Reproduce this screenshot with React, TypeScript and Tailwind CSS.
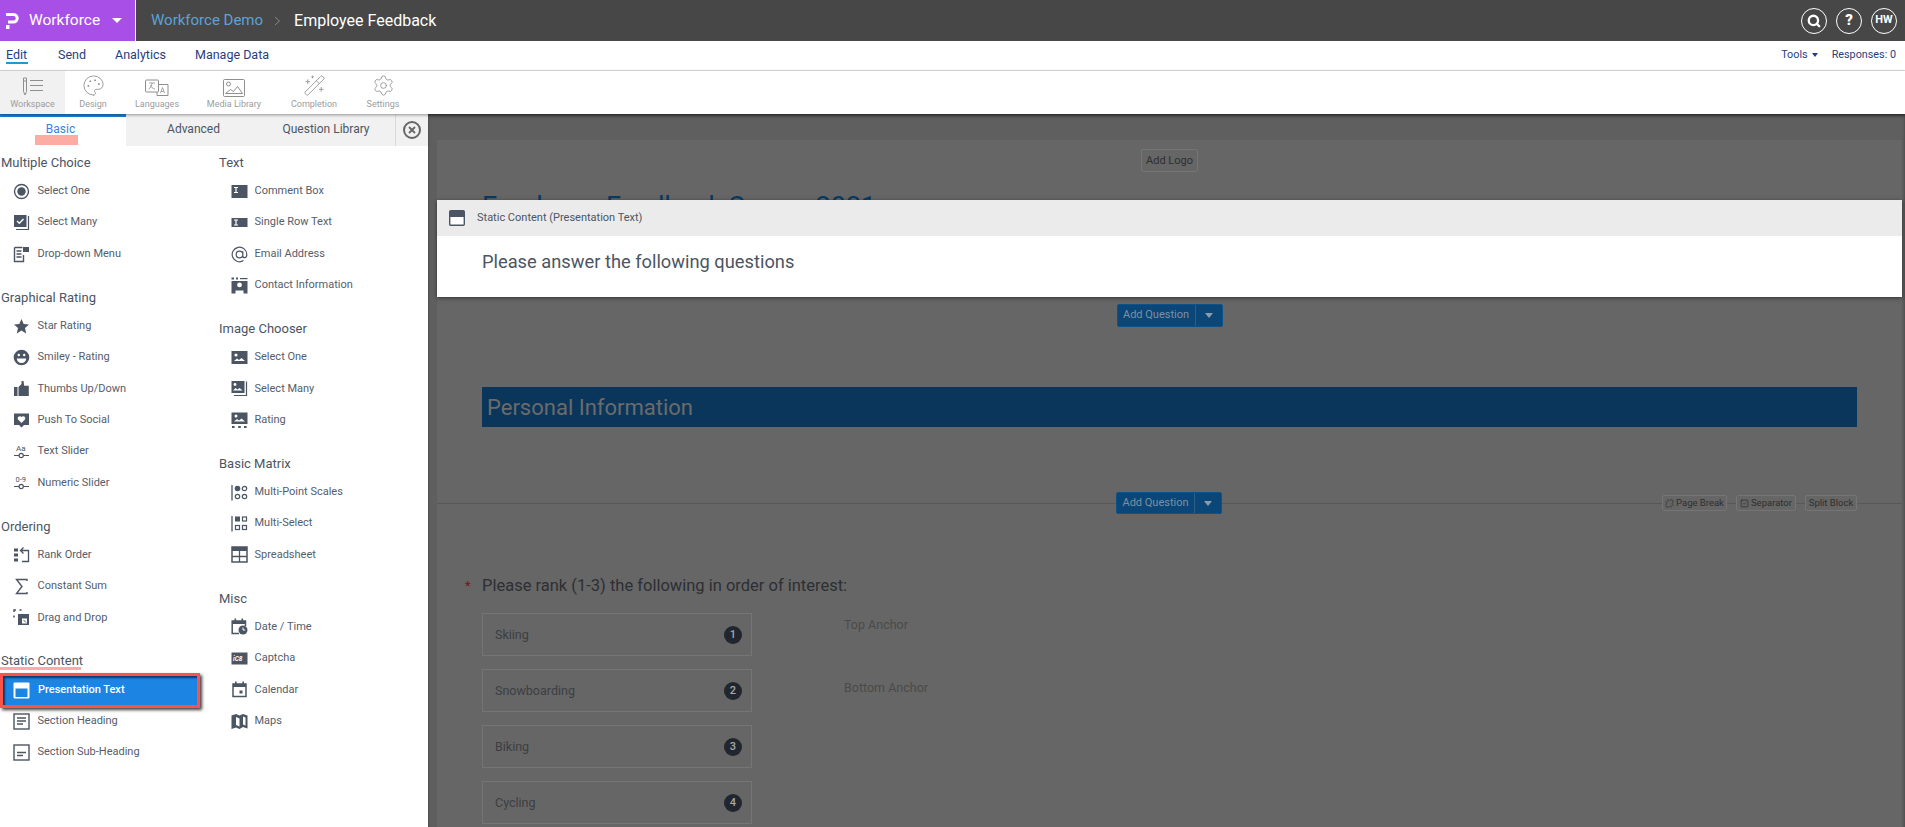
import React from "react";
import { Palette, Settings, WandSparkles, Search, Unlink, SquareCheck } from "lucide-react";

const C = "#4c5563";

function Ico({ name, light }: { name: string; light?: boolean }) {
  const f = C;
  const bg = light ? "#1c84e3" : "#fff";
  const svg = (children: React.ReactNode) => (
    <svg width="17" height="17" viewBox="0 0 17 17" className="shrink-0">{children}</svg>
  );
  switch (name) {
    case "radio":
      return svg(<><circle cx="8.5" cy="8.5" r="7" fill="none" stroke={f} strokeWidth="1.4" /><circle cx="8.5" cy="8.5" r="4.2" fill={f} /></>);
    case "check":
      return svg(<><rect x="1" y="1" width="12.5" height="12" fill={f} /><path d="M4 7l2.3 2.2L10.5 5" fill="none" stroke="#fff" strokeWidth="1.4" /><path d="M15.5 2v13.5H3" fill="none" stroke={f} strokeWidth="1.2" /></>);
    case "dropdown":
      return svg(<><path d="M1.5 1.5h8M1.5 1.5v14h9V9" fill="none" stroke={f} strokeWidth="1.4" /><rect x="10" y="1" width="6" height="5" fill={f} /><path d="M3.5 5h5M3.5 8h5M3.5 11h5" stroke={f} strokeWidth="1.4" /></>);
    case "star":
      return svg(<path d="M8.5 1l2.2 4.9 5.3.6-4 3.6 1.2 5.3-4.7-2.8-4.7 2.8 1.2-5.3-4-3.6 5.3-.6z" fill={f} />);
    case "smile":
      return svg(<><circle cx="8.5" cy="8.5" r="7.8" fill={f} /><circle cx="5.8" cy="6" r="1.2" fill="#fff" /><circle cx="11.2" cy="6" r="1.2" fill="#fff" /><path d="M3.8 9.4h9.4a4.7 4.7 0 0 1-9.4 0z" fill="#fff" /></>);
    case "thumb":
      return svg(<><rect x="1" y="7" width="3.5" height="9" fill={f} /><path d="M5.5 7l3-3V1h2l.7 4.7h4.6V16H5.5z" fill={f} /></>);
    case "social":
      return svg(<><path d="M1 1.5h15v11.5h-5l-2.5 2.5L6 13H1z" fill={f} /><path d="M8.5 11L4.8 7.2a2.2 2.2 0 0 1 3.7-2.2 2.2 2.2 0 0 1 3.7 2.2z" fill="#fff" /></>);
    case "tslider":
      return svg(<><text x="3" y="7.500" fontSize="8" fill={f} fontFamily="Roboto, sans-serif">Aa</text><path d="M1 12.5h5M10.5 12.5h5.5" stroke={f} strokeWidth="1.2" /><circle cx="8.2" cy="12.5" r="2.1" fill="none" stroke={f} strokeWidth="1.2" /></>);
    case "nslider":
      return svg(<><text x="2.500" y="6.5" fontSize="7.500" fill={f} fontFamily="Roboto, sans-serif">0-9</text><path d="M1 11.5h5M10.5 11.5h5.5" stroke={f} strokeWidth="1.2" /><circle cx="8.2" cy="11.5" r="2.1" fill="none" stroke={f} strokeWidth="1.2" /></>);
    case "rank":
      return svg(<><rect x="1" y="2.5" width="4" height="3" fill={f} /><rect x="1" y="7.5" width="4" height="3" fill={f} /><rect x="1" y="12.5" width="4" height="3" fill={f} /><path d="M9 15.5h6.5V4.5H8M10.5 1.5L7.5 4.5l3 3" fill="none" stroke={f} strokeWidth="1.3" /></>);
    case "sum":
      return svg(<path d="M14 3V1.5H3.5L9 8.5l-5.5 7H14V14" fill="none" stroke={f} strokeWidth="1.4" />);
    case "drag":
      return svg(<><path d="M1 3V1h2M6.5 1h2M1 6.5v2" fill="none" stroke={f} strokeWidth="1.5" /><rect x="5" y="5" width="11" height="11" fill={f} /><rect x="9" y="9.5" width="5" height="5" fill="#fff" /><path d="M10.5 11l2.5 2.5" stroke={f} strokeWidth="1" /></>);
    case "pres":
      return (
        <svg width="17" height="17" viewBox="0 0 17 17" className="shrink-0">
          <rect x="0.5" y="0.5" width="16" height="16" rx="1" fill="#fff" />
          <rect x="2.5" y="6.5" width="12" height="8.5" fill={bg} />
        </svg>
      );
    case "head":
      return svg(<><rect x="1" y="1" width="15" height="15" fill="none" stroke={f} strokeWidth="1.4" /><path d="M4 5h9M4 8h9M4 11h6" stroke={f} strokeWidth="1.4" /></>);
    case "sub":
      return svg(<><rect x="1" y="1" width="15" height="15" fill="none" stroke={f} strokeWidth="1.4" /><path d="M4 8.5h9M4 11.5h6" stroke={f} strokeWidth="1.4" /></>);
    case "comment":
      return svg(<><rect x="0.5" y="2" width="16" height="13" fill={f} /><path d="M3 4.5h4M3 9.5h4M5 4.5v5" stroke="#fff" strokeWidth="1.2" /></>);
    case "single":
      return svg(<><rect x="0.5" y="4" width="16" height="9" fill={f} /><path d="M3 6h4M3 11h4M5 6v5" stroke="#fff" strokeWidth="1.2" /></>);
    case "at":
      return svg(<><path d="M12.5 14.6A7.3 7.3 0 1 1 15.8 8.5c0 2-1 3.2-2.2 3.2s-1.8-.9-1.8-2V5.2M11.8 8.5a3.3 3.3 0 1 1-6.6 0 3.3 3.3 0 0 1 6.6 0z" fill="none" stroke={f} strokeWidth="1.2" /></>);
    case "contact":
      return svg(<><rect x="0.5" y="0.5" width="2.5" height="2" fill={f} /><rect x="5" y="0.5" width="2" height="2" fill={f} /><rect x="9" y="1" width="7.5" height="1.2" fill={f} /><path d="M0.500 4h16v12.500h-4v-3h-8v3h-4zM8.500 5.500a2.400 2.400 0 1 0 0 4.800 2.400 2.400 0 0 0 0-4.800z" fillRule="evenodd" fill={f} /></>);
    case "img":
      return svg(<><rect x="0.5" y="2" width="16" height="13" fill={f} /><circle cx="5" cy="6" r="1.6" fill="#fff" /><path d="M3 12l3-2.5 2 1.5 2.5-2 3.5 3z" fill="#fff" /></>);
    case "imgs":
      return svg(<><rect x="0.5" y="1" width="13" height="12" fill={f} /><circle cx="4" cy="4.5" r="1.4" fill="#fff" /><path d="M2 10.5l2.5-2.5 2 1.5 2-1.5 3 2.5z" fill="#fff" /><path d="M15.5 1.5v14H3" fill="none" stroke={f} strokeWidth="1.2" /></>);
    case "imgr":
      return svg(<><rect x="0.5" y="0.5" width="16" height="11.5" fill={f} /><circle cx="5" cy="4" r="1.5" fill="#fff" /><path d="M3 9.5l3-2.5 2 1.5 2.5-2 3.5 3z" fill="#fff" /><path d="M1 14h2.600v2H1zM7.200 14h2.600v2H7.200zM13 14h2.600v2H13z" fill={f} /></>);
    case "points":
      return svg(<><path d="M1 1v15.5" stroke={f} strokeWidth="1.3" /><circle cx="6.5" cy="4.5" r="2.8" fill={f} /><circle cx="13.5" cy="4.5" r="2.2" fill="none" stroke={f} strokeWidth="1.2" /><circle cx="6.5" cy="12.5" r="2.2" fill="none" stroke={f} strokeWidth="1.2" /><circle cx="13.5" cy="12.5" r="2.2" fill="none" stroke={f} strokeWidth="1.2" /></>);
    case "squares":
      return svg(<><path d="M1 1v15.5" stroke={f} strokeWidth="1.3" /><rect x="4" y="1.5" width="5" height="5" fill={f} /><rect x="11.5" y="2" width="4" height="4" fill="none" stroke={f} strokeWidth="1.2" /><rect x="4.5" y="10.5" width="4" height="4" fill="none" stroke={f} strokeWidth="1.2" /><rect x="11.5" y="10.5" width="4" height="4" fill="none" stroke={f} strokeWidth="1.2" /></>);
    case "sheet":
      return svg(<><rect x="1" y="1" width="15" height="15" fill="none" stroke={f} strokeWidth="1.5" /><rect x="1" y="1" width="15" height="4" fill={f} /><path d="M1 10.5h15M8.5 5v11" stroke={f} strokeWidth="1.3" /></>);
    case "date":
      return svg(<><path d="M8 15.5H1.2V3h13.3v5" fill="none" stroke={f} strokeWidth="1.5" /><path d="M1 3h14v3H1zM3.5 .5h1.6v3H3.5zM10.5.5h1.6v3h-1.6z" fill={f} /><circle cx="12" cy="12" r="4.5" fill={f} /><path d="M12 9.5V12h2.2" fill="none" stroke="#fff" strokeWidth="1" /></>);
    case "captcha":
      return svg(<><rect x="0.5" y="2.5" width="16" height="12" fill={f} /><text x="2" y="11" fontSize="6.5" fontStyle="italic" fontWeight="700" fill="#fff" fontFamily="Roboto, sans-serif">iC8</text></>);
    case "calendar":
      return svg(<><rect x="2" y="3" width="13" height="12.5" fill="none" stroke={f} strokeWidth="1.5" /><path d="M2 3h13v3H2zM4 .5h1.6v3H4zM11.4.5H13v3h-1.6z" fill={f} /><rect x="8.5" y="9.5" width="3" height="3" fill={f} /></>);
    case "map":
      return svg(<path d="M.5 2.500L5 1l3.500 1.500L12 1l4.500 1.500v13L12 14l-3.500 2L5 14.500.5 16zM5 4v8l3.500 1.500v-8zM12 3.500v8l2.500 1v-8z" fillRule="evenodd" fill={f} />);
    default:
      return null;
  }
}

type Row = [string, string];
const col1: { title: string; items: Row[] }[] = [
  { title: "Multiple Choice", items: [["radio", "Select One"], ["check", "Select Many"], ["dropdown", "Drop-down Menu"]] },
  { title: "Graphical Rating", items: [["star", "Star Rating"], ["smile", "Smiley - Rating"], ["thumb", "Thumbs Up/Down"], ["social", "Push To Social"], ["tslider", "Text Slider"], ["nslider", "Numeric Slider"]] },
  { title: "Ordering", items: [["rank", "Rank Order"], ["sum", "Constant Sum"], ["drag", "Drag and Drop"]] },
  { title: "Static Content", items: [["pres", "Presentation Text"], ["head", "Section Heading"], ["sub", "Section Sub-Heading"]] },
];
const col2: { title: string; items: Row[] }[] = [
  { title: "Text", items: [["comment", "Comment Box"], ["single", "Single Row Text"], ["at", "Email Address"], ["contact", "Contact Information"]] },
  { title: "Image Chooser", items: [["img", "Select One"], ["imgs", "Select Many"], ["imgr", "Rating"]] },
  { title: "Basic Matrix", items: [["points", "Multi-Point Scales"], ["squares", "Multi-Select"], ["sheet", "Spreadsheet"]] },
  { title: "Misc", items: [["date", "Date / Time"], ["captcha", "Captcha"], ["calendar", "Calendar"], ["map", "Maps"]] },
];

function Column({ groups, className, labelGap }: { groups: { title: string; items: Row[] }[]; className: string; labelGap: string }) {
  return (
    <div className={className}>
      {groups.map((g) => (
        <div key={g.title} className="mb-[16px]">
          <div className="relative h-[24.600px] text-[13px] leading-[24px] text-[#4c5563] pl-[1px]">
            {g.title === "Static Content" && <span className="absolute left-0 top-[18px] h-[3px] w-[81px] bg-[#fdaca4]" />}
            <span className="relative">{g.title}</span>
          </div>
          {g.items.map(([ic, label]) =>
            label === "Presentation Text" ? (
              <div key={label} className="relative z-10 -mt-[1px] mb-[-2.600px] flex h-[35px] w-[200px] items-center border-[3px] border-[#f9544b] bg-[#1c84e3] pl-[10px] shadow-[2px_2px_3px_rgba(0,0,0,0.75),inset_2px_2px_2px_rgba(0,0,0,0.55)]">
                <Ico name={ic} light />
                <span className="ml-[8px] text-[11px] font-medium text-white">{label}</span>
              </div>
            ) : (
              <div key={label} className="flex h-[31.400px] items-center pl-[12.500px] text-[11px] text-[#555d6b]">
                <Ico name={ic} />
                <span className={`${labelGap} whitespace-nowrap`}>{label}</span>
              </div>
            )
          )}
        </div>
      ))}
    </div>
  );
}

function ToolLabel({ w, active, label, children }: { w: string; active?: boolean; label: string; children: React.ReactNode }) {
  return (
    <div className={`${w} flex h-full flex-col items-center ${active ? "bg-[#f1f1f1]" : ""}`}>
      <div className="flex h-[26px] items-end justify-center text-[#8f8f8f]">{children}</div>
      <div className="mt-[1px] text-[9px] leading-[13px] whitespace-nowrap text-[#9c9c9c]">{label}</div>
    </div>
  );
}

function Split({ className }: { className: string }) {
  return (
    <div className={`${className} relative z-10 flex h-[23px] w-[106px] items-center rounded-[2px] border border-[#0d5288] bg-[#0a4677] text-[11px] text-[#7f90a1]`}>
      <span className="flex h-full w-[78px] items-center justify-center border-r border-[#2a5f8a]">Add Question</span>
      <span className="flex flex-1 justify-center">
        <span className="h-0 w-0 border-x-[4px] border-t-[5px] border-x-transparent border-t-[#8d9cab]" />
      </span>
    </div>
  );
}

const ranks = ["Skiing", "Snowboarding", "Biking", "Cycling"];

export default function App() {
  return (
    <div className="flex h-[827px] w-[1905px] flex-col overflow-hidden bg-white [font-family:Roboto,sans-serif]">
      {/* top bar */}
      <header className="flex h-[41px] shrink-0 items-center bg-[#474747]">
        <div className="flex h-full w-[136px] items-center border-r border-white bg-[#a84fe8] text-white">
          <svg width="14" height="20" viewBox="0 0 14 20" className="ml-[5px]">
            <path d="M1 3.500H8.500A3.700 3.700 0 0 1 8.500 11H3" fill="none" stroke="#fff" strokeWidth="3" />
            <rect x="1" y="14" width="3.500" height="4" fill="#fff" />
          </svg>
          <span className="ml-[10px] text-[15.500px]">Workforce</span>
          <span className="ml-[12px] h-0 w-0 border-x-[5px] border-t-[5px] border-x-transparent border-t-white" />
        </div>
        <span className="ml-[15px] text-[15px] text-[#5ba3d6]">Workforce Demo</span>
        <svg width="7" height="10" viewBox="0 0 7 10" className="ml-[11px]"><path d="M1 1l4.500 4L1 9" fill="none" stroke="#888" strokeWidth="1" /></svg>
        <span className="ml-[13px] text-[16px] text-white">Employee Feedback</span>
        <div className="ml-auto mr-[8px] flex gap-[9px] text-white">
          <span className="flex h-[26px] w-[26px] items-center justify-center rounded-full border-[1.500px] border-white"><Search size={14} strokeWidth={4} /></span>
          <span className="flex h-[26px] w-[26px] items-center justify-center rounded-full border-[1.500px] border-white text-[15px] font-black">?</span>
          <span className="flex h-[26px] w-[26px] items-center justify-center rounded-full border-[1.500px] border-white text-[11px] font-bold">HW</span>
        </div>
      </header>

      {/* nav */}
      <nav className="flex h-[30px] shrink-0 items-center border-b border-[#dedede] bg-white pb-[1px] pl-[6px] text-[12.500px] text-[#1f3f7f]">
        <span className="relative w-[52px]">Edit<span className="absolute left-0 top-[16px] h-[2px] w-[22px] bg-[#1c9ad6]" /></span>
        <span className="w-[57px]">Send</span>
        <span className="w-[80px]">Analytics</span>
        <span>Manage Data</span>
        <div className="ml-auto mr-[9px] flex items-center text-[10.800px]">
          <span>Tools</span>
          <span className="ml-[4px] h-0 w-0 border-x-[3.500px] border-t-[4px] border-x-transparent border-t-[#1f3f7f]" />
          <span className="ml-[14px]">Responses: 0</span>
        </div>
      </nav>

      {/* toolbar */}
      <div className="relative z-20 flex h-[43px] shrink-0 bg-white shadow-[0_1px_3px_rgba(0,0,0,0.4)]">
        <ToolLabel w="w-[65px]" active label="Workspace">
          <svg width="22" height="20" viewBox="0 0 22 20" fill="none" stroke="#8f8f8f">
            <path d="M1.500 1h3v13.500L3 18l-1.500-3.500z" />
            <path d="M1.500 4h3" />
            <path d="M8 3.500h13M8 8.500h13M8 13.500h13" />
          </svg>
        </ToolLabel>
        <ToolLabel w="w-[56px]" label="Design"><Palette size={23} strokeWidth={0.9} /></ToolLabel>
        <ToolLabel w="w-[72px]" label="Languages">
          <svg width="24" height="18" viewBox="0 0 24 18" fill="none" stroke="#8f8f8f">
            <rect x="0.500" y="1" width="13" height="12" rx="1" />
            <path d="M14 5.500h9v11h-11V13" />
            <path d="M4 4h6M7 4c0 3-1.500 5-3.500 6M5 6c1 2 3 4 5 4" strokeWidth="0.800" />
            <path d="M15.500 14l2-5.500 2 5.500M16.200 12.500h2.600" strokeWidth="0.800" />
          </svg>
        </ToolLabel>
        <ToolLabel w="w-[82px]" label="Media Library">
          <svg width="22" height="18" viewBox="0 0 22 18" fill="none" stroke="#8f8f8f">
            <rect x="0.500" y="0.500" width="21" height="17" rx="1" />
            <circle cx="5.500" cy="5" r="2" />
            <path d="M2.500 14.500l5-4 3 2 4-5 5 7z" />
          </svg>
        </ToolLabel>
        <ToolLabel w="w-[78px]" label="Completion"><WandSparkles size={23} strokeWidth={0.9} /></ToolLabel>
        <ToolLabel w="w-[60px]" label="Settings"><Settings size={23} strokeWidth={0.9} /></ToolLabel>
      </div>

      <div className="flex min-h-0 flex-1">
        {/* left panel */}
        <aside className="w-[428px] shrink-0 bg-white">
          <div className="flex h-[32px] text-[12px] text-[#4c5563]">
            <div className="relative w-[126px] border-t-[3px] border-[#1c7ed6] bg-white pt-[3px] pr-[5px] text-center text-[#3f7fe0]">
              Basic
              <span className="absolute left-[35px] top-[18px] h-[10px] w-[43px] bg-[#fdaca4]" />
            </div>
            <div className="flex flex-1 bg-[#f1f1f1] pt-[6px]">
              <span className="w-[133px] pl-[2px] text-center">Advanced</span>
              <span className="w-[134px] text-center">Question Library</span>
              <div className="-mt-[6px] ml-[2px] flex flex-1 items-center justify-center border-l border-[#d9d9d9]">
                <span className="flex h-[18px] w-[18px] items-center justify-center rounded-full border-2 border-[#666]">
                  <svg width="8" height="8" viewBox="0 0 8 8"><path d="M1 1l6 6M7 1l-6 6" stroke="#666" strokeWidth="1.800" /></svg>
                </span>
              </div>
            </div>
          </div>
          <div className="flex pt-[5px]">
            <Column groups={col1} className="w-[218px]" labelGap="ml-[8px]" />
            <Column groups={col2} className="flex-1" labelGap="ml-[7px]" />
          </div>
        </aside>

        {/* dimmed canvas */}
        <main className="min-w-0 flex-1 bg-[#5f5f5f] pl-[9px] pr-[3px] pt-[26px] shadow-[inset_0_2px_3px_rgba(0,0,0,0.35)]">
          <div className="relative h-[700px] bg-[#666666] pt-[9px]">
            <div className="mx-auto flex h-[23px] w-[57px] items-center justify-center rounded-[2px] border border-[#757575] pt-[1px] text-[11px] text-[#2f2f2f]">Add Logo</div>
            <div className="ml-[45px] mt-[17px] h-[36px] text-[27px] leading-[36px] text-[#0a3a60]">Employee Feedback Survey 2021</div>

            {/* focused block */}
            <div className="absolute inset-x-0 top-[60px] z-10 bg-white shadow-[0_1px_4px_rgba(0,0,0,0.5)]">
              <div className="flex h-[36px] items-center bg-[#ebebeb] pl-[12px] text-[11px] text-[#4c5563]">
                <svg width="16" height="16" viewBox="0 0 16 16"><rect x="0.700" y="0.700" width="14.600" height="14.600" rx="1" fill="#fff" stroke="#4c5563" strokeWidth="1.400" /><rect x="1" y="1" width="14" height="6" fill="#4c5563" /></svg>
                <span className="ml-[12px]">Static Content (Presentation Text)</span>
              </div>
              <div className="h-[61px] pl-[45px] pt-[14px] text-[18.300px] leading-[24px] text-[#4c5563]">Please answer the following questions</div>
            </div>

            <Split className="mx-auto mt-[79px]" />

            <div className="mx-[45px] mt-[60px] flex h-[40px] items-center bg-[#0a365c] pl-[5px] text-[22px] text-[#6b6b6b]">Personal Information</div>

            <div className="relative mt-[65px] flex h-[22px] items-center">
              <span className="absolute inset-x-0 top-[11px] h-[1px] bg-[#585858]" />
              <Split className="ml-[679px] !h-[22px]" />
              <div className="relative ml-[440px] flex gap-[9px] text-[9.500px] text-[#2f2f2f]">
                <span className="flex h-[16px] w-[65px] items-center justify-center gap-[2px] rounded-[2px] border border-[#757575] bg-[#666666]"><Unlink size={9} />Page Break</span>
                <span className="flex h-[16px] w-[60px] items-center justify-center gap-[2px] rounded-[2px] border border-[#757575] bg-[#666666]"><SquareCheck size={9} />Separator</span>
                <span className="flex h-[16px] w-[52px] items-center justify-center rounded-[2px] border border-[#757575] bg-[#666666]">Split Block</span>
              </div>
            </div>

            <div className="ml-[28px] mt-[62px] flex items-center text-[16.500px] leading-[20px] text-[#2d2f33]">
              <span className="w-[17px] text-[13px] text-[#7a1418]">*</span>
              Please rank (1-3) the following in order of interest:
            </div>
            <div className="ml-[45px] mt-[17px] flex">
              <div className="flex w-[270px] flex-col gap-[13px]">
                {ranks.map((r, i) => (
                  <div key={r} className="flex h-[43px] items-center justify-between border border-[#757575] pl-[12px] pr-[9px] pt-[1px] text-[12.500px] text-[#3c3e42]">
                    {r}
                    <span className="flex h-[18px] w-[18px] items-center justify-center rounded-full bg-[#21262e] text-[11px] font-medium text-[#a8a8a8]">{i + 1}</span>
                  </div>
                ))}
              </div>
              <div className="ml-[92px] pt-[3px] text-[12.500px] text-[#4a4a4a]">
                <div>Top Anchor</div>
                <div className="mt-[44px]">Bottom Anchor</div>
              </div>
            </div>
          </div>
        </main>
      </div>
    </div>
  );
}
